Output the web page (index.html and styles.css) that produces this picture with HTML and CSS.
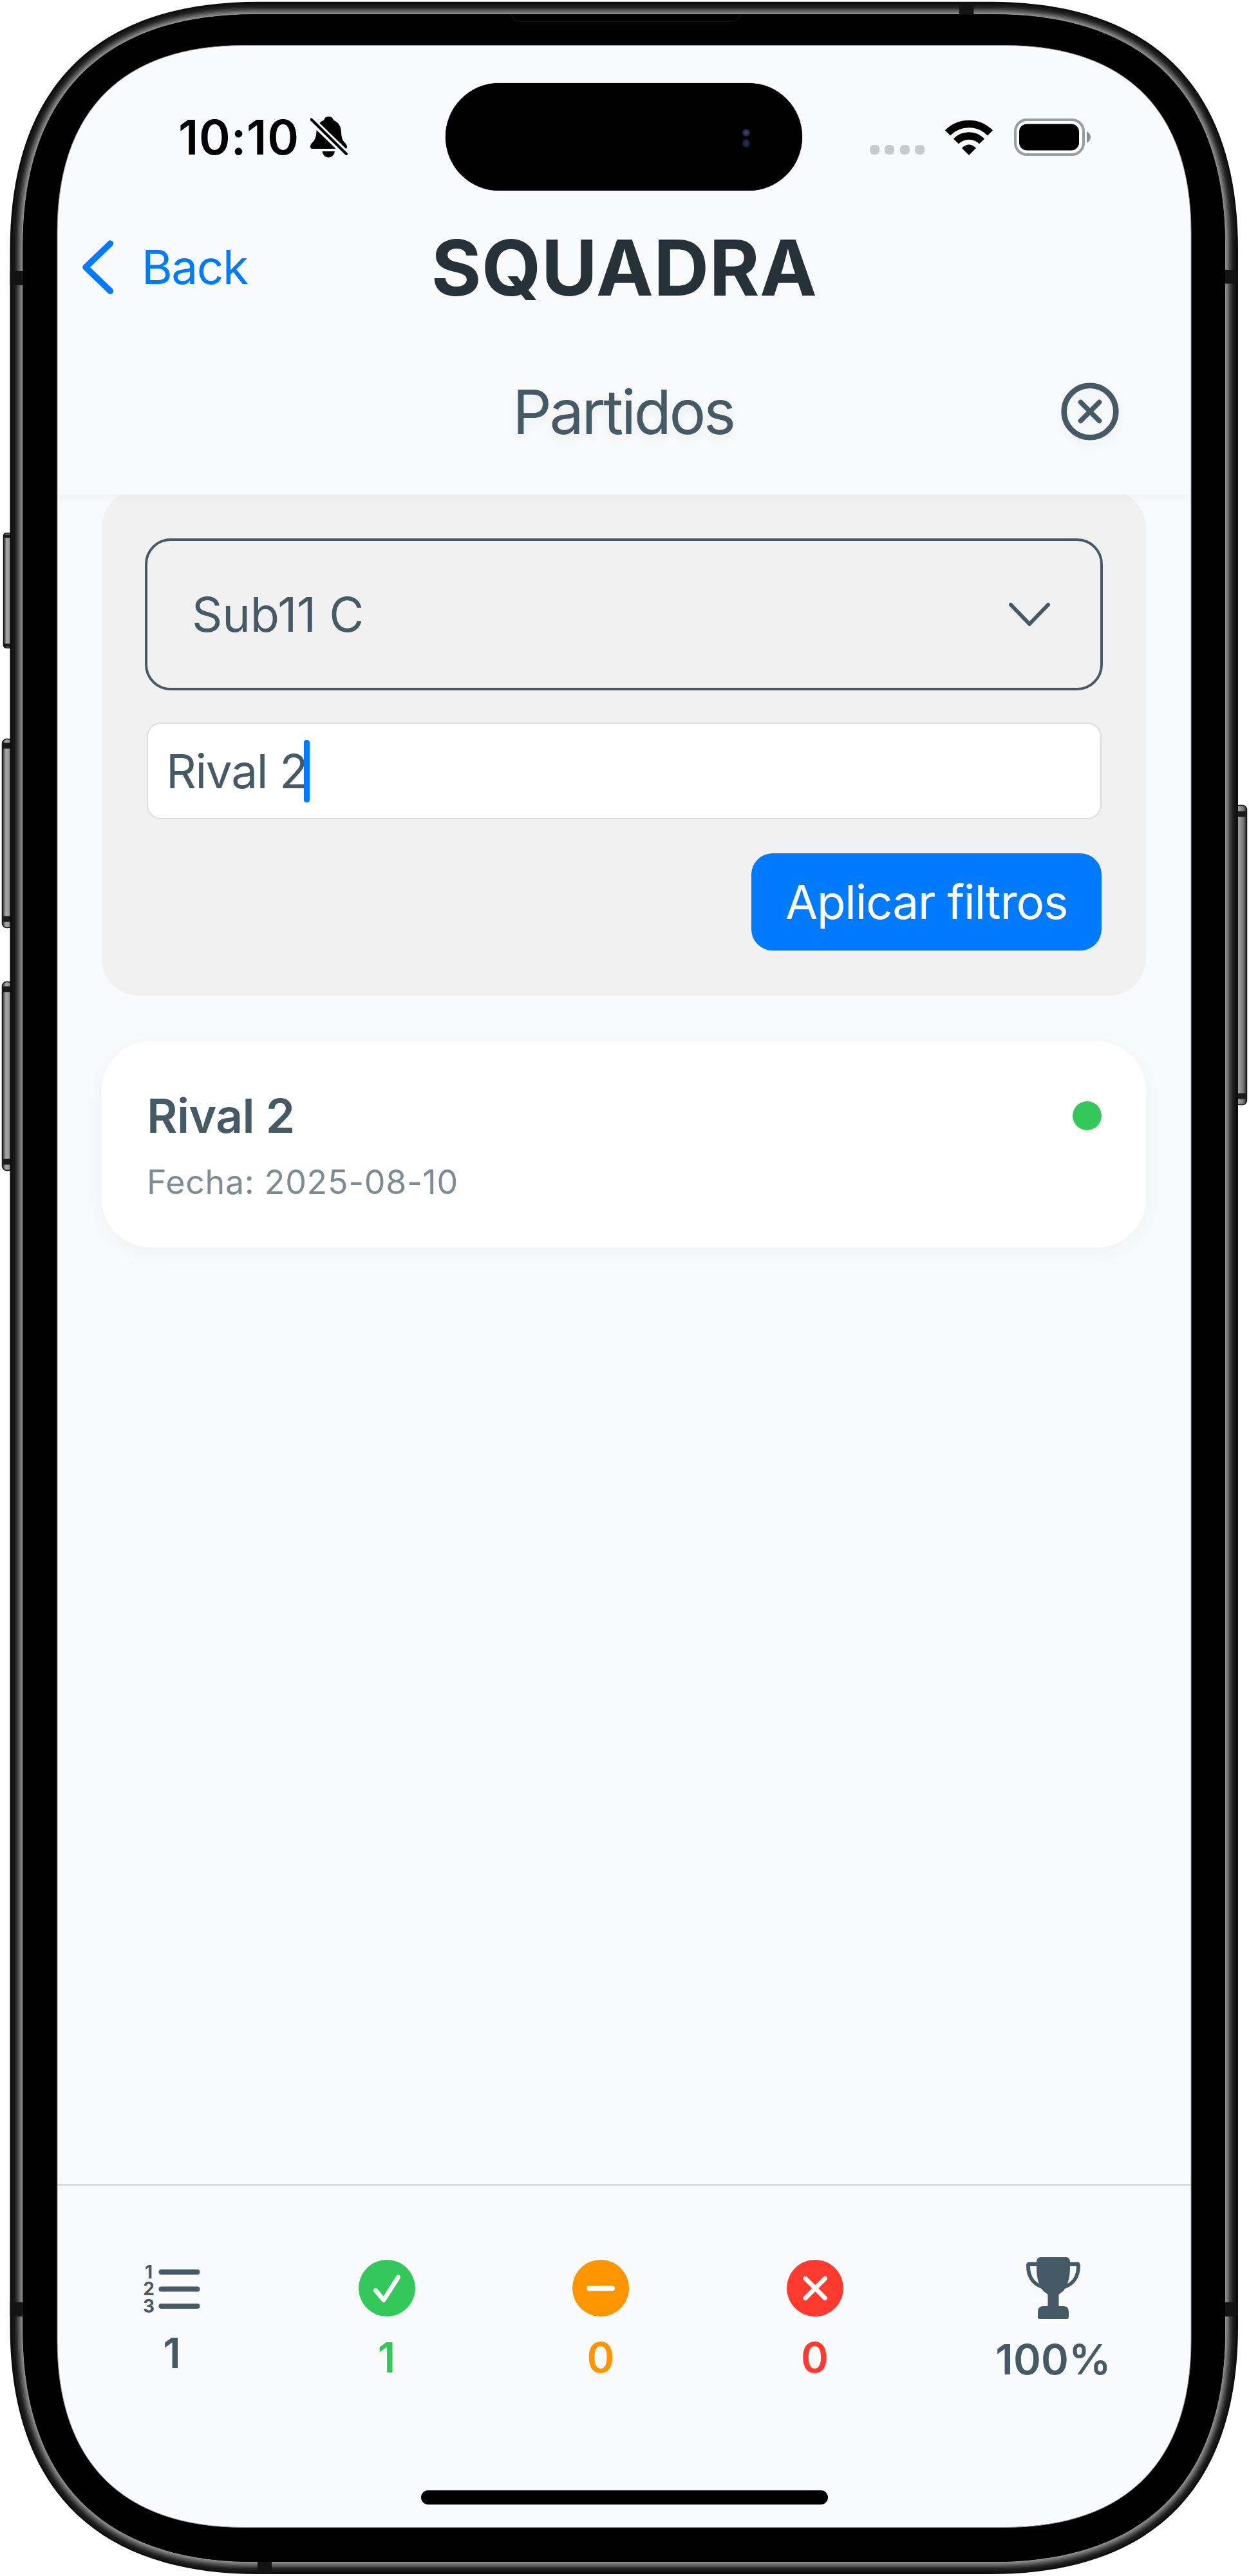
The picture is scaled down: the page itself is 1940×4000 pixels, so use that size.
FILE: index.html
```html
<!DOCTYPE html>
<html lang="es">
<head>
<meta charset="utf-8">
<title>Squadra</title>
<link rel="stylesheet" href="styles.css">
</head>
<body>
<div class="device">
  <div class="screen">
    <header class="header">
      <div class="status">
        <div class="status-left">
          <span class="time">10:10</span>
          <svg class="bell" viewBox="0 0 58 64"><path d="M28.500 0c4 0 6.500 2 7.500 5.500C44 9 47.500 15 48 24c.4 9 2 13 6 17 4 4 4 9 .5 9H3c-4 0-4-5-.5-9 4-4 6.500-8 7-17C10 15 13 9 21 5.500 22 2 24.500 0 28.500 0z"/><path d="M18.500 54h19.500c-1 6-5 9.500-9.700 9.500S19.500 60 18.500 54z"/><path d="M-4 0L62 64" stroke="#f9fafc" stroke-width="11"/><path d="M1.500 4.500L56 58" stroke="#000" stroke-width="4.200" stroke-linecap="round"/></svg>
        </div>
        <div class="status-right">
          <div class="cell"><i></i><i></i><i></i><i></i></div>
          <svg class="wifi" viewBox="0 0 74 55" fill="none" stroke="#000" stroke-width="11.500"><path d="M4 20.500A46 46 0 0 1 70 20.500"/><path d="M17 33.500A28 28 0 0 1 57 33.500"/><path d="M26 44Q37 33 48 44L37 55Z" fill="#000" stroke="none"/></svg>
          <svg class="battery" viewBox="0 0 120 58"><rect x="2" y="2" width="106" height="54" rx="18" fill="#fff" stroke="#9b9c9d" stroke-width="4"/><rect x="8" y="8.500" width="93" height="41" rx="12"/><path d="M113 20c8 4 8 14 0 18z" fill="#8e8f90"/></svg>
        </div>
      </div>
      <nav class="nav">
        <a class="back"><svg viewBox="0 0 50 86" fill="none" stroke="#007aff" stroke-width="9.500" stroke-linecap="round" stroke-linejoin="round"><path d="M44.500 6L6 43L44.500 80"/></svg><span>Back</span></a>
        <h1>SQUADRA</h1>
      </nav>
      <div class="subheader">
        <h2>Partidos</h2>
        <svg class="close" viewBox="0 0 90 90" fill="none" stroke="#455a64" stroke-linecap="round"><circle cx="45" cy="45" r="40.300" stroke-width="8.600"/><path d="M30.500 30.500l29 29m0-29l-29 29" stroke-width="7.500"/></svg>
      </div>
    </header>
    <main class="content">
      <section class="filters">
        <div class="select"><span>Sub11 C</span><svg viewBox="0 0 64 38" fill="none" stroke="#455a64" stroke-width="6" stroke-linecap="round" stroke-linejoin="round"><path d="M3 4l29 30L61 4"/></svg></div>
        <div class="input"><span>Rival 2</span><i class="caret"></i></div>
        <div class="apply">Aplicar filtros</div>
      </section>
      <article class="match">
        <div>
          <h3>Rival 2</h3>
          <p>Fecha: 2025-08-10</p>
        </div>
        <span class="dot"></span>
      </article>
    </main>
    <footer class="stats">
      <div class="stat total">
        <svg viewBox="0 0 90 96"><g stroke="#455a64" stroke-width="8" stroke-linecap="round"><path d="M28.500 23h56M28.500 49.500h56M28.500 76h56"/></g><g fill="#455a64" class="list-numbers"><text x="9" y="32.500">1</text><text x="9" y="59">2</text><text x="9" y="86">3</text></g></svg>
        <span>1</span>
      </div>
      <div class="stat won">
        <svg viewBox="0 0 88 96"><circle cx="44" cy="48" r="44" fill="#34c759"/><path d="M26.500 51.500L39 66.500L61.500 31" fill="none" stroke="#fff" stroke-width="7" stroke-linecap="round" stroke-linejoin="round"/></svg>
        <span>1</span>
      </div>
      <div class="stat drawn">
        <svg viewBox="0 0 88 96"><circle cx="44" cy="48" r="44" fill="#ff9500"/><path d="M26.500 48.300h35.500" stroke="#fff" stroke-width="8" stroke-linecap="round"/></svg>
        <span>0</span>
      </div>
      <div class="stat lost">
        <svg viewBox="0 0 88 96"><circle cx="44" cy="48" r="44" fill="#ff3b30"/><path d="M29 33l30.500 30.500M59.500 33L29 63.500" stroke="#fff" stroke-width="7" stroke-linecap="round"/></svg>
        <span>0</span>
      </div>
      <div class="stat rate">
        <svg viewBox="0 0 84 96"><path d="M22 0h40c4 0 6 3 6 7.500h11c3 0 5 2 5 5.500 0 18-8 30-24 36-2 4-6 6-9.500 9v18H58c6 0 8 4 8 10v7c0 2-1 3-3 3H21c-2 0-3-1-3-3v-7c0-6 2-10 8-10h7.500V58c-3.500-3-7.500-5-9.500-9C8 43 0 31 0 13 0 9.500 2 7.500 5 7.500h11C16 3 18 0 22 0z" fill="#455a64"/><path d="M6 14h10c0 12 1 19 4 27C11 36 6 27 6 14zM78 14H68c0 12-1 19-4 27 9-5 14-14 14-27z" fill="#f9fafc"/></svg>
        <span>100%</span>
      </div>
    </footer>
    <div class="island"><i></i><i></i></div>
    <div class="home"></div>
  </div>
  <svg class="frame" viewBox="0 0 1940 4000">
    <defs>
      <linearGradient id="key"><stop offset="0" stop-color="#222"/><stop offset=".35" stop-color="#aaa"/><stop offset=".75" stop-color="#8c8c8c"/><stop offset="1" stop-color="#444"/></linearGradient>
      <linearGradient id="keyRight" x1="1" x2="0"><stop offset="0" stop-color="#222"/><stop offset=".3" stop-color="#777"/><stop offset=".75" stop-color="#a5a5a5"/><stop offset="1" stop-color="#333"/></linearGradient>
      <path id="outer" d="M15.500 388C15.500 136 149 2.700 401 2.700H1538C1790 2.700 1923 136 1923 388V3612C1923 3864 1790 3997 1538 3997H401C149 3997 15.500 3864 15.500 3612Z"/>
      <mask id="body"><rect width="1940" height="4000" fill="#fff"/><path fill="#000" d="M89 361C89 172 190 70.500 379 70.500H1560C1749 70.500 1850 172 1850 361V3634C1850 3823 1749 3924.500 1560 3924.500H379C190 3924.500 89 3823 89 3634Z"/></mask>
    </defs>
    <path fill="#fff" fill-rule="evenodd" d="M0 0H1940V4000H0ZM15.500 388V3612C15.500 3864 149 3997 401 3997H1538C1790 3997 1923 3864 1923 3612V388C1923 136 1790 2.700 1538 2.700H401C149 2.700 15.500 136 15.500 388Z"/>
    <g stroke="#111" stroke-width="1.500">
      <g fill="url(#key)"><rect x="5.500" y="828" width="14" height="178" rx="4"/><rect x="3.500" y="1147.500" width="16" height="293" rx="7"/><rect x="3.500" y="1524.500" width="16" height="293" rx="7"/></g>
      <rect x="1918" y="1250.500" width="18.500" height="465" rx="7" fill="url(#keyRight)"/>
    </g>
    <g stroke="#1a1a1a" stroke-width="9"><path d="M6 832.500h12M6 1002h12" stroke-width="5"/><path d="M5 1158h12M5 1427h12M5 1536h12M5 1804h12M1922 1264h13M1922 1702h13"/></g>
    <g mask="url(#body)">
      <use href="#outer" fill="#0e0e0e"/>
      <g fill="none">
        <use href="#rim" stroke="#181818" stroke-width="32"/>
        <use href="#rim" stroke="#242424" stroke-width="25"/>
        <use href="#rim" stroke="#383838" stroke-width="20"/>
        <use href="#rim" stroke="#4c4c4c" stroke-width="16"/>
        <use href="#rim" stroke="#626262" stroke-width="12"/>
        <use href="#rim" stroke="#787878" stroke-width="8"/>
        <use href="#rim" stroke="#8c8c8c" stroke-width="4"/>
      </g>
      <path id="rim" d="M35.500 382C35.500 147 161 22.200 396 22.200H1543C1778 22.200 1903 147 1903 382V3618C1903 3853 1778 3978 1543 3978H396C161 3978 35.500 3853 35.500 3618Z"/>
      <use href="#rim" fill="#000"/>
      <path d="M794 23L799 30Q801 33 806 33H1138Q1144 33 1146 29L1151 23" fill="none" stroke="#141414" stroke-width="1.500"/>
      <g fill="#131313"><path d="M15.500 421h20v22h-20zM1903 419h20v21.500h-20zM15.500 3575h20v22h-20zM1903 3575h20v22h-20zM1490 3h22.500v19.500H1490zM400 3978h22v19h-22z"/></g>
    </g>
    <path fill="none" stroke="#999" stroke-width="1" d="M89 361C89 172 190 70.500 379 70.500H1560C1749 70.500 1850 172 1850 361V3634C1850 3823 1749 3924.500 1560 3924.500H379C190 3924.500 89 3823 89 3634Z"/>
  </svg>
</div>
</body>
</html>
```
FILE: styles.css
```css
* { box-sizing: border-box; margin: 0; padding: 0; }
body { width: 1940px; height: 4000px; background: #fff; font-family: Inter, "Liberation Sans", sans-serif; color: #455a64; overflow: hidden; }
svg { display: block; flex: none; }
.device { position: relative; width: 1940px; height: 4000px; padding: 70px 90px 75px 89px; }
.frame { position: absolute; z-index: 1; inset: 0; width: 1940px; height: 4000px; }
.screen { position: relative; z-index: 0; height: 3855px; background: #f9fafc; display: flex; flex-direction: column; }

.header { position: relative; z-index: 1; height: 698px; flex: none; background: #f9fafc; box-shadow: 0 4px 16px rgba(0, 0, 0, .045); }
.status { height: 284px; display: flex; justify-content: space-between; align-items: center; padding: 2px 151px 0 188px; }
.status-left, .status-right { display: flex; align-items: center; }
.time { width: 205px; font-size: 74px; font-weight: 600; letter-spacing: .8px; color: #000; white-space: nowrap; }
.bell { width: 58px; height: 64px; overflow: hidden; }
.cell { display: flex; gap: 8.500px; margin: 39px 32px 0 0; }
.cell i { width: 15px; height: 15px; border-radius: 6px; background: #c8c9cb; }
.wifi { width: 74px; height: 55px; margin-right: 33px; }
.battery { width: 120px; height: 58px; margin-right: 4px; }
.nav { height: 118px; display: grid; grid-template-columns: 1fr auto 1fr; align-items: center; }
.back { display: flex; align-items: center; gap: 43px; padding-left: 38px; font-size: 73px; color: #007aff; letter-spacing: -1.500px; }
.back svg { width: 50px; height: 86px; }
h1 { font-size: 119px; line-height: 118px; font-weight: 700; letter-spacing: .4px; padding-top: 3px; color: #263238; }
.subheader { height: 258px; margin-top: 38px; display: grid; grid-template-columns: 1fr auto 1fr; align-items: center; padding-right: 112px; }
h2 { grid-column: 2; font-size: 95px; font-weight: 400; letter-spacing: -3.400px; margin-left: 109px; text-shadow: 0 8px 16px rgba(0, 0, 0, .06); }
.close { width: 90px; height: 90px; justify-self: end; filter: drop-shadow(0 8px 8px rgba(0, 0, 0, .04)); }

.content { flex: 1; padding: 0 70px 0 69px; overflow: hidden; }
.filters { margin-top: -7px; height: 785px; padding: 75px 67px 70px; border-radius: 58px; background: #f1f1f2; display: flex; flex-direction: column; }
.select { height: 236px; border: 4.500px solid #455a64; border-radius: 40px; display: flex; align-items: center; justify-content: space-between; padding: 0 78px 0 69px; font-size: 74px; letter-spacing: -.3px; }
.select svg { width: 64px; height: 38px; }
.input { height: 150px; margin: 50px 2px 0 3px; border: 2px solid #dcdddf; border-radius: 22px; background: #fff; display: flex; align-items: center; padding-left: 28px; font-size: 73px; letter-spacing: -1.400px; }
.caret { width: 9px; height: 97px; border-radius: 4px; background: #007aff; margin-left: -5px; }
.apply { width: 544px; height: 151px; margin: 53px 2px 0 auto; border-radius: 33px; background: #007aff; color: #fff; font-size: 73px; line-height: 151px; text-align: center; letter-spacing: -1.300px; white-space: nowrap; }
.match { height: 320px; margin-top: 71px; padding: 76px 69px 0 70px; border-radius: 76px; background: #fff; box-shadow: 0 8px 40px rgba(0, 0, 0, .04); display: flex; justify-content: space-between; }
h3 { font-size: 73px; line-height: 80px; font-weight: 600; letter-spacing: -.6px; }
.match p { margin-top: 33px; font-size: 52px; line-height: 60px; letter-spacing: .65px; color: #7d8c93; white-space: nowrap; }
.dot { width: 45px; height: 45px; margin-top: 17px; border-radius: 50%; background: #34c759; }

.stats { height: 534px; flex: none; border-top: 3px solid #d8dadc; display: flex; align-items: flex-start; gap: 244.500px; padding: 111px 0 0 133px; }
.stat { width: 88px; display: flex; flex-direction: column; align-items: center; font-size: 65px; font-weight: 600; line-height: 60px; }
.stat svg { width: 88px; height: 96px; }
.stat span { margin-top: 30px; }
.total { width: 90px; }
.stat.total svg { width: 90px; }
.stat.total span { margin-top: 23px; }
.list-numbers { font-size: 28px; font-weight: 700; text-anchor: middle; }
.won { color: #34c759; }
.drawn { color: #ff9500; }
.lost { color: #ff3b30; }
.rate { width: 164px; }
.stat.rate svg { width: 84px; }
.stat.rate span { margin-top: 33px; letter-spacing: .3px; }

.island { position: absolute; z-index: 2; left: 603px; top: 59px; width: 554px; height: 167px; border-radius: 84px; background: #000; box-shadow: 0 0 1px #000; }
.island i { position: absolute; left: 461px; top: 71px; width: 12px; height: 12px; border-radius: 50%; background: radial-gradient(#4a4580, #0c0a18); }
.island i + i { top: 87px; height: 13px; background: radial-gradient(#2b3468, #0a0c18); }
.home { position: absolute; left: 565px; top: 3797px; width: 632px; height: 22px; border-radius: 11px; background: #000; }
```
